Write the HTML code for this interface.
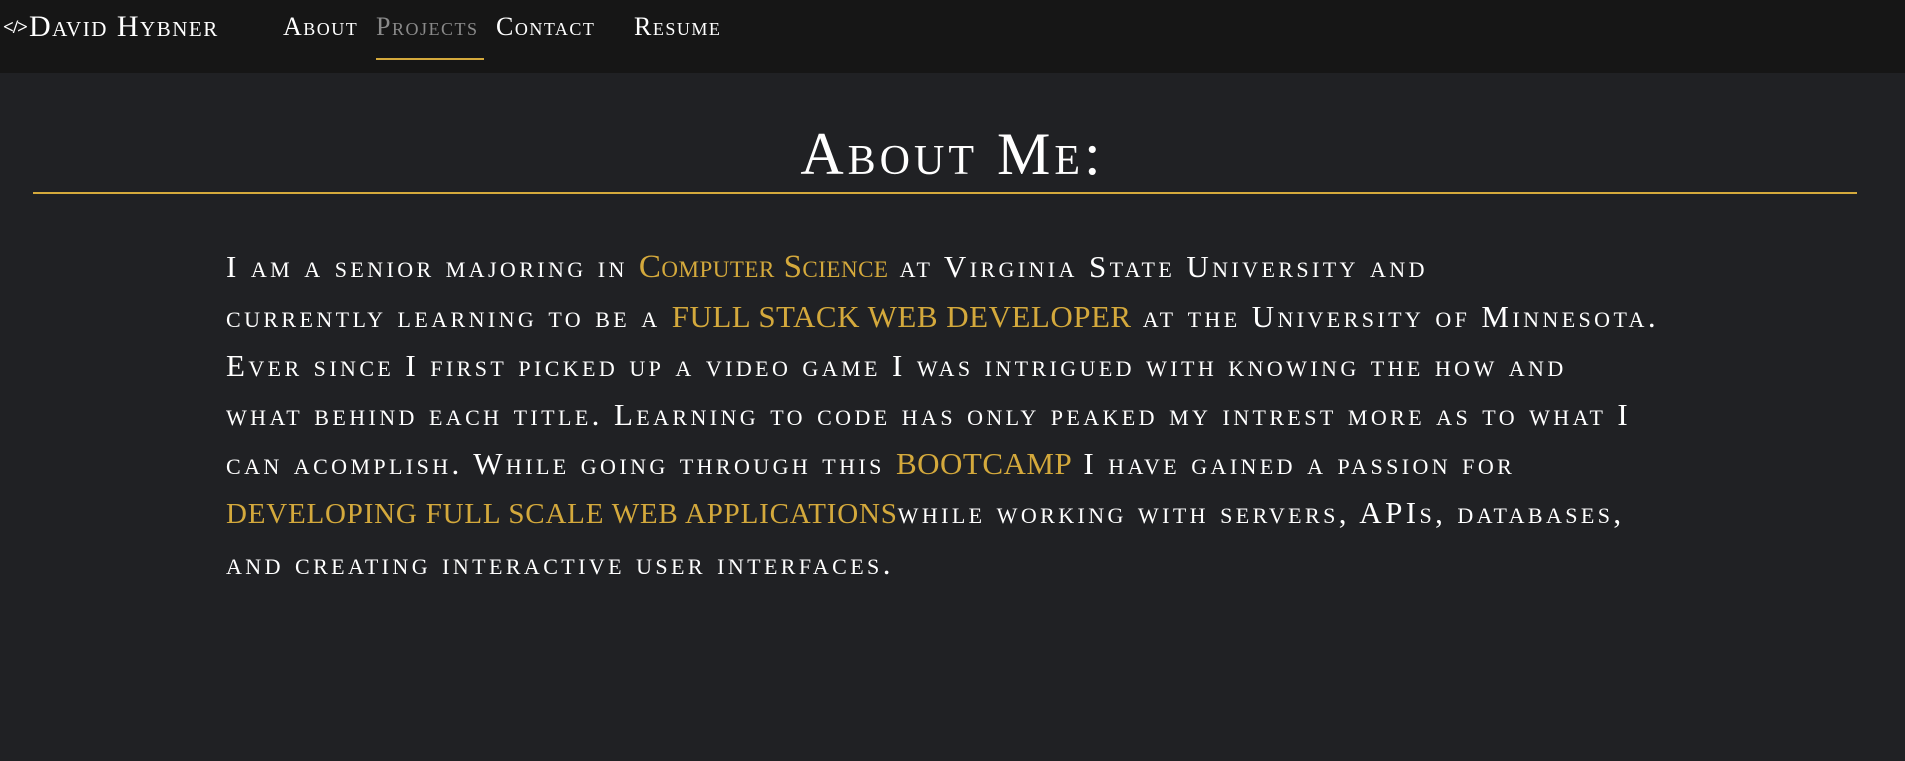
<!DOCTYPE html>
<html><head><meta charset="utf-8"><style>
body{margin:0;background:#202124;width:1905px;height:761px;overflow:hidden;font-family:"Liberation Serif",serif;color:#fff;font-variant:small-caps}
.nav{height:73px;background:#161616;position:relative}
.nav span{position:absolute;top:12px;font-size:26px;white-space:nowrap;letter-spacing:1.5px}
.brand{left:3px;font-size:30px!important;top:10px!important;letter-spacing:1.5px}
.brand b{font-size:19px;letter-spacing:-1px;vertical-align:3px;margin-right:2px}
.u{position:absolute;left:376px;top:58px;width:108px;height:2px;background:#d4a93c}
h1{position:absolute;top:120px;left:0;width:1905px;text-align:center;margin:0;font-weight:normal;font-size:60px;letter-spacing:4px}
.hr{position:absolute;left:33px;top:192px;width:1824px;height:2px;background:#d4a93c}
.p{position:absolute;left:226px;top:242px;font-size:31px;line-height:49px;white-space:nowrap;letter-spacing:3.4px}
.g{color:#d4a93c;font-size:31px;letter-spacing:0.5px}
.g2{color:#d4a93c;font-size:29px;letter-spacing:0.8px;text-transform:uppercase}
</style></head><body>
<div class="nav">
<span class="brand"><b>&lt;/&gt;</b>David Hybner</span>
<span style="left:283px">About</span>
<span style="left:376px;color:#8a8a8a">Projects</span>
<span style="left:496px">Contact</span>
<span style="left:634px">Resume</span>
<div class="u"></div>
</div>
<h1>About Me:</h1>
<div class="hr"></div>
<div class="p">I am a senior majoring in <span class="g" style="font-size:33px">Computer Science</span> at Virginia State University and<br>
currently learning to be a <span class="g">FULL STACK WEB DEVELOPER</span> at the University of Minnesota.<br>
Ever since I first picked up a video game I was intrigued with knowing the how and<br>
what behind each title. Learning to code has only peaked my intrest more as to what I<br>
can acomplish. While going through this <span class="g">BOOTCAMP</span> I have gained a passion for<br>
<span class="g2">developing full scale web applications</span>while working with servers, APIs, databases,<br>
and creating interactive user interfaces.</div>
</body></html>
